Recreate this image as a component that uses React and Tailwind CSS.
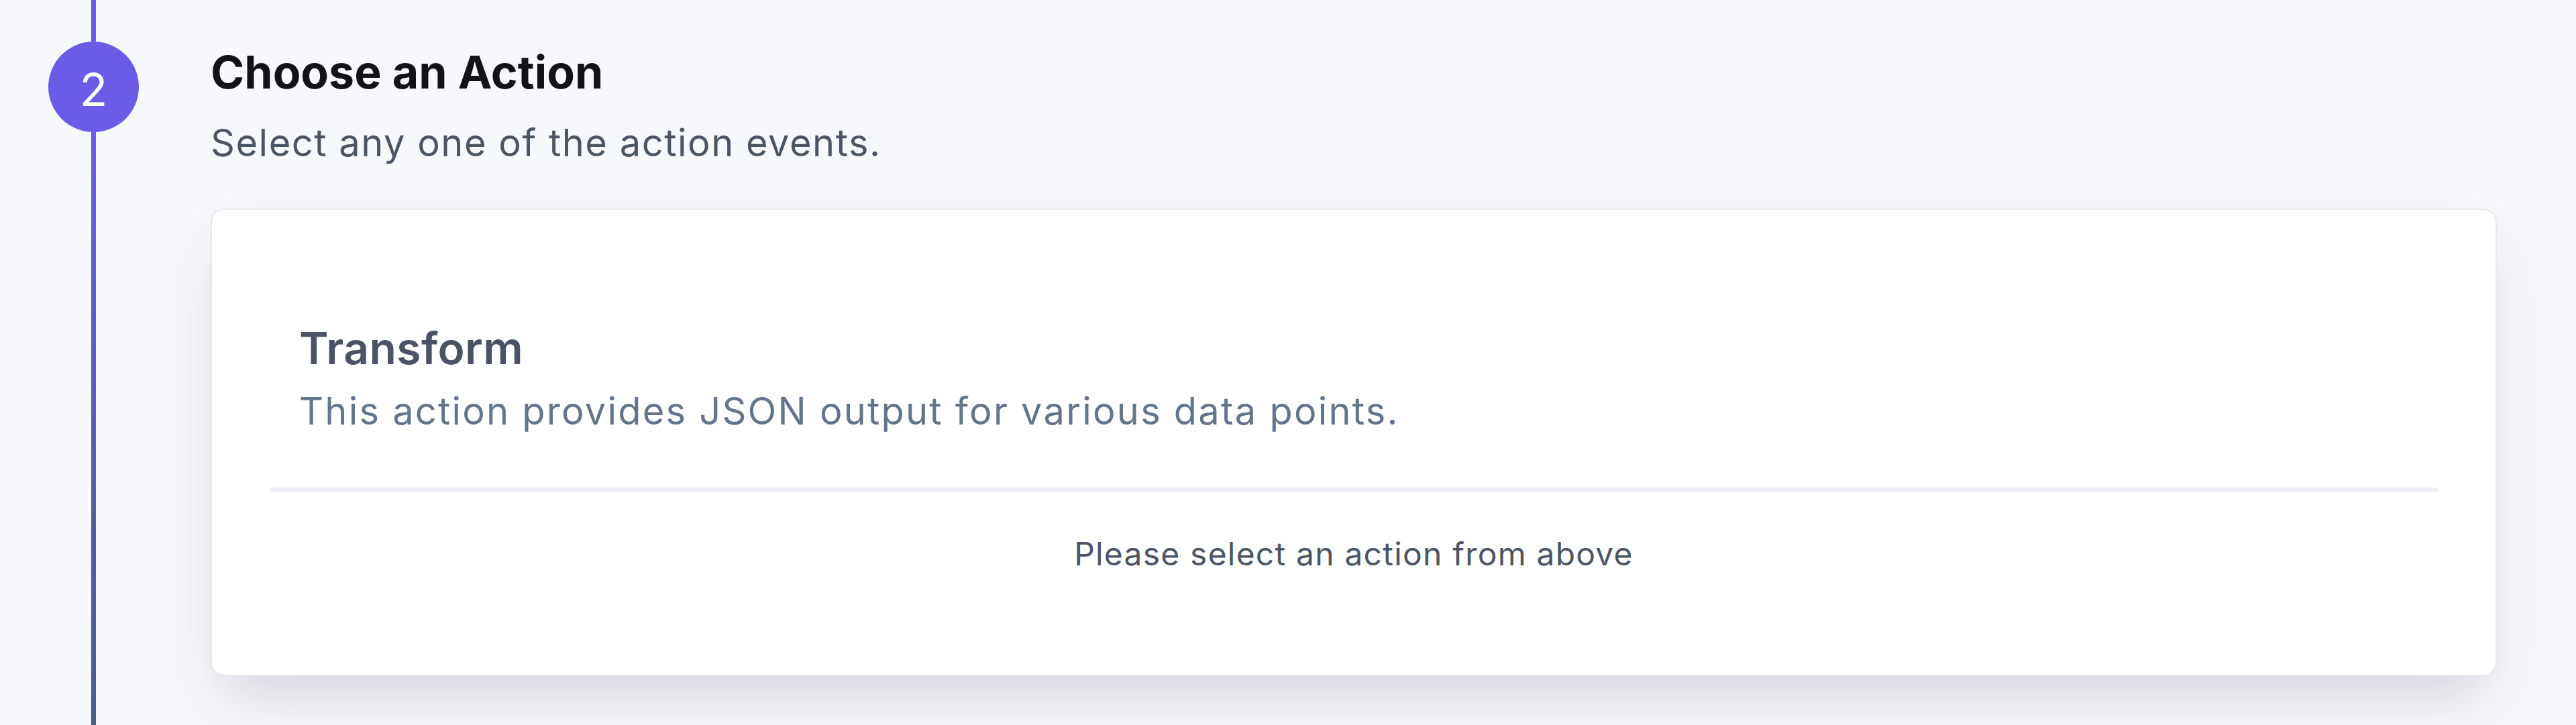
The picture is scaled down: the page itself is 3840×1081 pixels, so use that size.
export default function App() {
  return (
    <div className="flex min-h-screen w-full bg-[#f7f8fc] font-['Inter','Noto_Sans',sans-serif]">
      {/* Step rail */}
      <div className="flex w-[279px] shrink-0 flex-col items-center">
        <div className="h-[62px] w-[7px] bg-[#6b5ce7]" />
        <div className="flex h-[135px] w-[135px] shrink-0 items-center justify-center rounded-full bg-[#6b5ce7] pt-[6px] text-[68px] leading-none text-white">
          2
        </div>
        <div className="w-[7px] flex-1 bg-linear-to-b from-[#6b5ce7] to-[#4c5a86]" />
      </div>

      {/* Step content */}
      <div className="flex-1 pl-[35px] pr-[118px] pt-[65px]">
        <h2 className="text-[68px] font-bold leading-[84px] text-[#111318]">Choose an Action</h2>
        <p className="mt-[30px] text-[56px] leading-[68px] tracking-[1.5px] text-[#4b5563]">Select any one of the action events.</p>

        <div className="mt-[64px] rounded-[20px] border-2 border-[#e9e9ec] bg-white px-[86px] pb-[151px] pt-[166px] shadow-[0_45px_90px_-15px_rgba(30,35,60,0.16)]">
          <div className="pl-[44px]">
            <h3 className="text-[66px] font-semibold leading-[80px] tracking-[0.4px] text-[#4a5263]">Transform</h3>
            <p className="mt-[20px] text-[56px] leading-[68px] tracking-[2.2px] text-[#64748b]">
              This action provides JSON output for various data points.
            </p>
          </div>
          <div className="mt-[80px] h-[6px] bg-[#eef0f5]" />
          <p className="mt-[64px] text-center text-[48px] leading-[58px] tracking-[1.2px] text-[#4b5563]">Please select an action from above</p>
        </div>
      </div>
    </div>
  );
}
